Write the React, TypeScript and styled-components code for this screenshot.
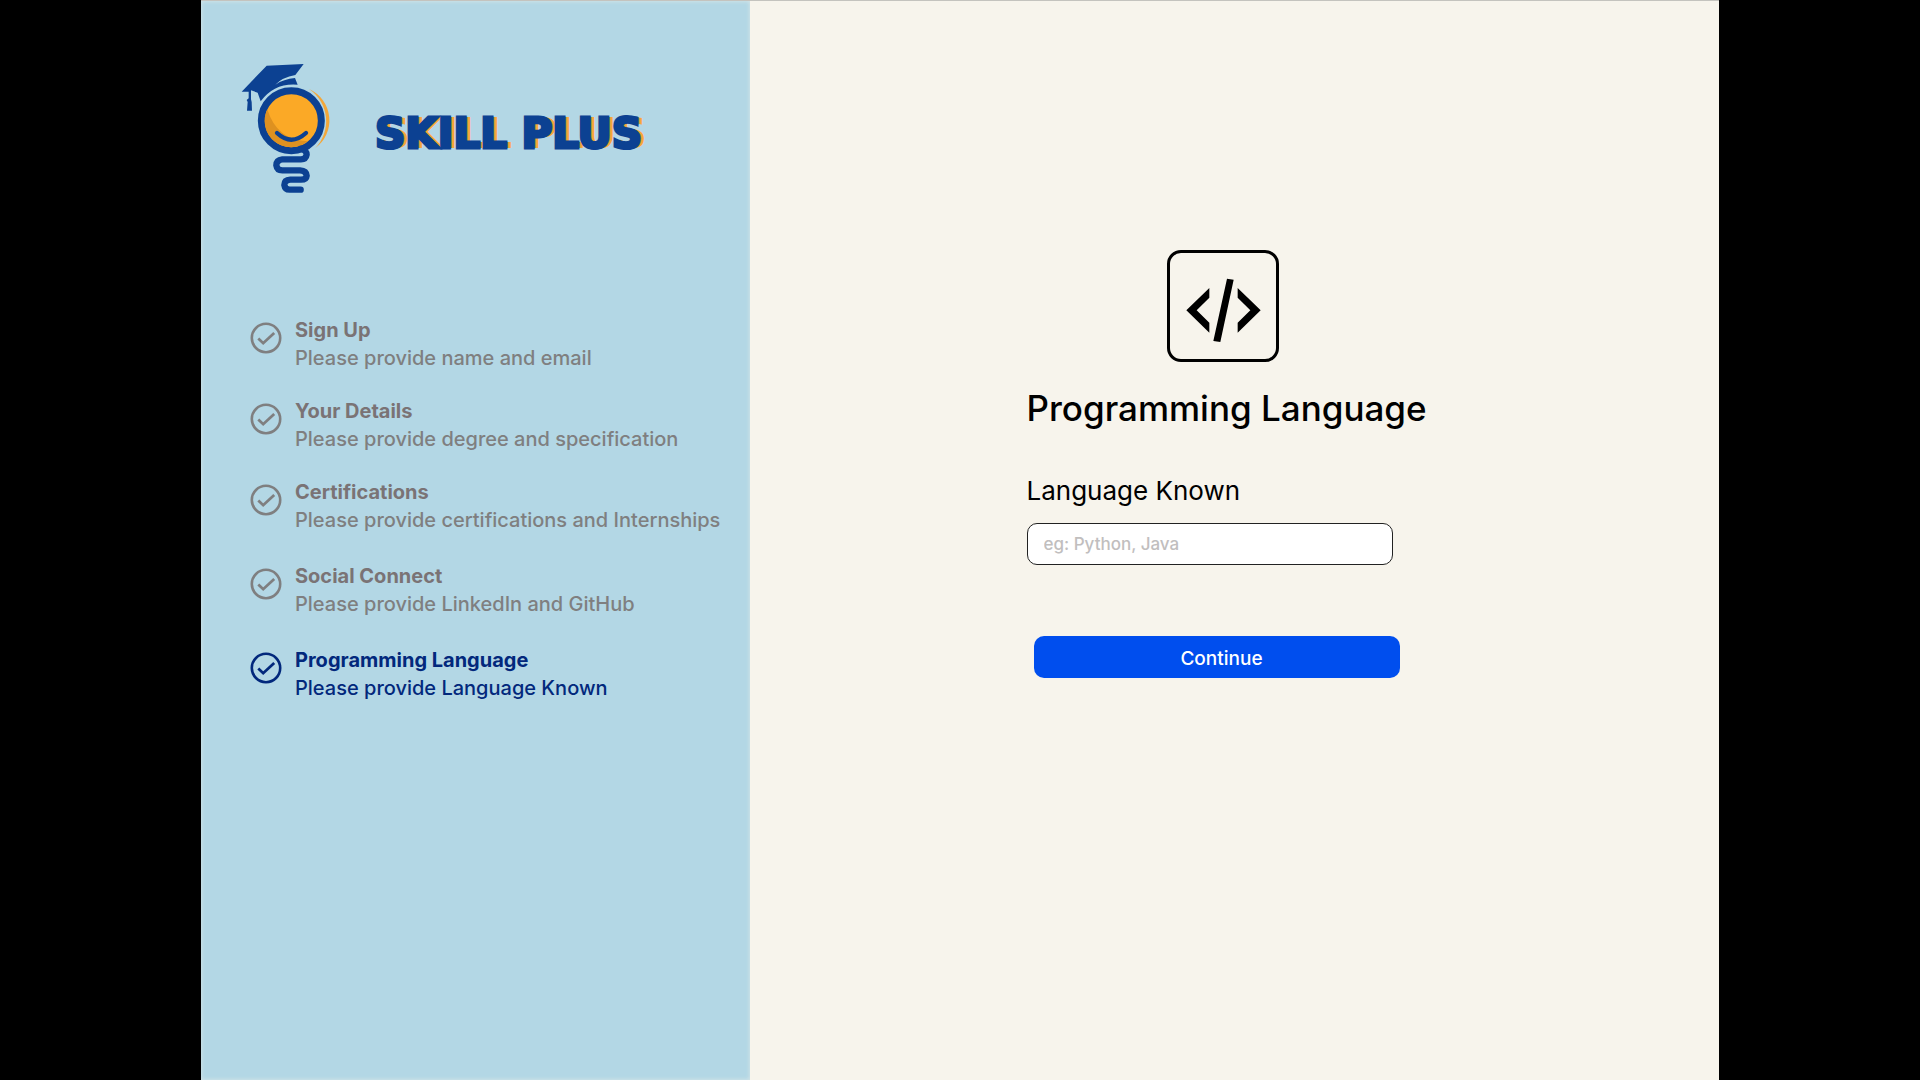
import React from "react";
import styled, { createGlobalStyle } from "styled-components";

const GlobalStyle = createGlobalStyle`
  * { box-sizing: border-box; }
  body {
    margin: 0;
    background: #000;
    font-family: Inter, "Noto Sans", sans-serif;
  }
`;

const Frame = styled.div`
  display: grid;
  grid-template-columns: 549fr 969fr;
  min-height: 100vh;
  margin: 0 201px;
  border-top: 1px solid #c4c3be;
  background: #f7f4ec;
`;

const Sidebar = styled.aside`
  padding: 49px 24px 40px 20px;
  background: #b3d7e5;
  box-shadow: inset 0 0 4px #dbe8e8;
`;

const Brand = styled.div`
  display: flex;
  align-items: center;
  gap: 24px;
`;

const Wordmark = styled.span`
  padding-top: 8px;
  color: #0c4192;
  font-family: "DejaVu Sans", sans-serif;
  font-size: 42px;
  font-weight: 700;
  line-height: 52px;
  white-space: nowrap;
  -webkit-text-stroke: 3px #0c4192;
  text-shadow: 2px 0 0 #8b8c82, 5px 0 0 #f3a73a;
`;

const Steps = styled.ol`
  display: flex;
  flex-direction: column;
  margin: 106px 0 0;
  padding: 0 0 0 29px;
  list-style: none;
`;

const Step = styled.li<{ $active?: boolean; $gap: number }>`
  display: flex;
  gap: 13px;
  margin-bottom: ${(p) => p.$gap}px;
  color: ${(p) => (p.$active ? "#02287c" : "#7f7f80")};
  font-size: 20px;
  font-weight: 500;
  line-height: 28px;
  white-space: nowrap;

  svg {
    flex: none;
    margin-top: 6px;
  }

  h2 {
    margin: 0;
    color: ${(p) => (p.$active ? "#02287c" : "#7a7375")};
    font-size: 20px;
    font-weight: 700;
    line-height: 28px;
  }

  p { margin: 0; }
`;

const Main = styled.main`
  display: flex;
  justify-content: center;
  padding: 249px 24px 40px;
`;

const Form = styled.form`
  display: flex;
  flex-direction: column;
  align-items: flex-start;
  width: 416px;
`;

const IconBox = styled.div`
  width: 112px;
  height: 112px;
  margin-left: 140px;
  border: 3px solid #000;
  border-radius: 14px;

  svg { display: block; }
`;

const Title = styled.h1`
  margin: 24px 0 0;
  color: #000;
  font-size: 35px;
  font-weight: 500;
  line-height: 44px;
  white-space: nowrap;
`;

const Label = styled.label`
  margin-top: 45px;
  color: #000;
  font-size: 26px;
  line-height: 32px;
`;

const TextInput = styled.input`
  width: 366px;
  height: 42px;
  margin-top: 16px;
  padding: 0 16px;
  border: 1px solid #222;
  border-radius: 10px;
  background: #fff;
  color: #000;
  font: 500 17px Inter, "Noto Sans", sans-serif;

  &::placeholder {
    color: #c1bebe;
    opacity: 1;
  }
`;

const SubmitButton = styled.button`
  width: 366px;
  height: 42px;
  margin: 71px 0 0 7px;
  padding: 2px 0 0 10px;
  border: 0;
  border-radius: 10px;
  background: #004eee;
  color: #fff;
  font: 500 19px Inter, "Noto Sans", sans-serif;
  cursor: pointer;
`;

const LogoMark = () => (
  <svg width="130" height="160" viewBox="0 0 390 480" fill="none" aria-hidden="true">
    <path d="M62 125L137 47L248 42L223 75Q184 82 163 104Q188 87 222 84L230 104Q160 98 119 154L110 128L90 121V148L92 156L93 182H78L80 156L77 150L83 145V125Z" fill="#0c4192" />
    <path d="M264 117A103 103 0 0 1 282 295A116 116 0 0 0 264 117Z" fill="#f3a73a" />
    <circle cx="211" cy="212" r="90" fill="#fba926" stroke="#0c4192" strokeWidth="21" />
    <path d="M139 178A79 79 0 0 0 260 274Q168 272 139 178Z" fill="#de9120" />
    <path d="M168 249Q211 289 255 249" stroke="#0c4192" strokeWidth="13" strokeLinecap="round" />
    <path d="M240 296Q257 301 257 314Q255 328 240 328H184Q166 330 166 346Q168 361 184 361H237Q256 362 257 377Q256 389 240 389H208Q190 390 190 405Q192 419 206 419H239" stroke="#0c4192" strokeWidth="19" strokeLinecap="round" strokeLinejoin="round" />
  </svg>
);

const CheckIcon = () => (
  <svg width="32" height="32" viewBox="0 0 32 32" fill="none" stroke="currentColor" aria-hidden="true">
    <circle cx="16" cy="16" r="14.2" strokeWidth="2.6" />
    <path d="M8.3 16.6L13.2 21.2L24.2 11" strokeWidth="2.8" />
  </svg>
);

const CodeIcon = () => (
  <svg width="106" height="106" viewBox="91 54 318 318" aria-hidden="true">
    <path d="M140 226L209 159V188L171 226L209 263V293ZM262 131L282 134L242 321L221 318ZM294 159L363 226L294 293V263L332 226L294 188Z" />
  </svg>
);

const steps = [
  { title: "Sign Up", text: "Please provide name and email", gap: 25 },
  { title: "Your Details", text: "Please provide degree and specification", gap: 25 },
  { title: "Certifications", text: "Please provide certifications and Internships", gap: 28 },
  { title: "Social Connect", text: "Please provide LinkedIn and GitHub", gap: 28 },
  { title: "Programming Language", text: "Please provide Language Known", gap: 0, active: true },
];

export default function App() {
  return (
    <>
      <GlobalStyle />
      <Frame>
        <Sidebar>
          <Brand>
            <LogoMark />
            <Wordmark>SKILL PLUS</Wordmark>
          </Brand>
          <Steps>
            {steps.map((step) => (
              <Step key={step.title} $active={step.active} $gap={step.gap}>
                <CheckIcon />
                <div>
                  <h2>{step.title}</h2>
                  <p>{step.text}</p>
                </div>
              </Step>
            ))}
          </Steps>
        </Sidebar>
        <Main>
          <Form onSubmit={(e) => e.preventDefault()}>
            <IconBox>
              <CodeIcon />
            </IconBox>
            <Title>Programming Language</Title>
            <Label htmlFor="language">Language Known</Label>
            <TextInput id="language" type="text" placeholder="eg: Python, Java" />
            <SubmitButton type="submit">Continue</SubmitButton>
          </Form>
        </Main>
      </Frame>
    </>
  );
}
